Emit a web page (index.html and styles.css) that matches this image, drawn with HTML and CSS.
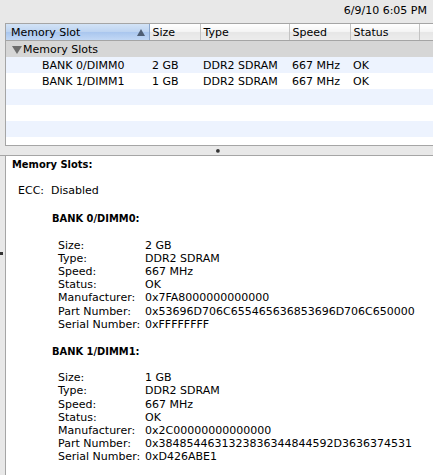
FILE: index.html
```html
<!DOCTYPE html>
<html lang="en">
<head>
    <meta charset="UTF-8">
    <title>System Profiler - Memory</title>
    <link rel="stylesheet" href="styles.css">
</head>
<body>

<!-- Top bar with timestamp -->
<div class="topbar">6/9/10 6:05 PM</div>

<!-- Memory slot table -->
<div class="list-pane">
    <table class="slots">
        <colgroup>
            <col class="c-slot">
            <col class="c-size">
            <col class="c-type">
            <col class="c-speed">
            <col class="c-status">
            <col>
        </colgroup>
        <thead>
            <tr>
                <th class="sorted">Memory Slot <span class="sort-arrow"></span></th>
                <th>Size</th>
                <th>Type</th>
                <th>Speed</th>
                <th>Status</th>
                <th class="filler"></th>
            </tr>
        </thead>
        <tbody>
            <tr class="group">
                <td colspan="6"><span class="disclosure"></span>Memory Slots</td>
            </tr>
            <tr class="odd">
                <td class="indent">BANK 0/DIMM0</td>
                <td>2 GB</td>
                <td>DDR2 SDRAM</td>
                <td>667 MHz</td>
                <td>OK</td>
                <td></td>
            </tr>
            <tr>
                <td class="indent">BANK 1/DIMM1</td>
                <td>1 GB</td>
                <td>DDR2 SDRAM</td>
                <td>667 MHz</td>
                <td>OK</td>
                <td></td>
            </tr>
            <tr class="odd"><td colspan="6"></td></tr>
            <tr><td colspan="6"></td></tr>
            <tr class="odd"><td colspan="6"></td></tr>
        </tbody>
    </table>
</div>

<!-- Splitter -->
<div class="splitter"><span class="dimple"></span></div>

<!-- Detail pane -->
<div class="detail-pane">
    <span class="edge-mark"></span>
    <div class="detail-title">Memory Slots:</div>

    <div class="ecc">
        <span>ECC:</span>
        <span>Disabled</span>
    </div>

    <div class="bank">
        <div class="bank-title">BANK 0/DIMM0:</div>
        <div class="props">
            <span>Size:</span><span>2 GB</span>
            <span>Type:</span><span>DDR2 SDRAM</span>
            <span>Speed:</span><span>667 MHz</span>
            <span>Status:</span><span>OK</span>
            <span>Manufacturer:</span><span>0x7FA8000000000000</span>
            <span>Part Number:</span><span>0x53696D706C655465636853696D706C650000</span>
            <span>Serial Number:</span><span>0xFFFFFFFF</span>
        </div>
    </div>

    <div class="bank">
        <div class="bank-title">BANK 1/DIMM1:</div>
        <div class="props">
            <span>Size:</span><span>1 GB</span>
            <span>Type:</span><span>DDR2 SDRAM</span>
            <span>Speed:</span><span>667 MHz</span>
            <span>Status:</span><span>OK</span>
            <span>Manufacturer:</span><span>0x2C00000000000000</span>
            <span>Part Number:</span><span>0x3848544631323836344844592D3636374531</span>
            <span>Serial Number:</span><span>0xD426ABE1</span>
        </div>
    </div>
</div>

</body>
</html>
```

FILE: styles.css
```css
body {
    font-family: "DejaVu Sans", sans-serif;
    font-size: 11px;
    color: #000;
    margin: 0;
    padding: 0;
    height: 475px;
    overflow: hidden;
    background-color: #e8e8e8;
    display: flex;
    flex-direction: column;
}

/* Top bar */
.topbar {
    height: 23px;
    line-height: 22px;
    text-align: right;
    padding-right: 6px;
}

/* Table pane */
.list-pane {
    margin-left: 5px;
    height: 123px;
    background-color: #fff;
    border-left: 1px solid #a5a5a5;
    border-top: 1px solid #a5a5a5;
    border-bottom: 1px solid #a5a5a5;
    box-sizing: border-box;
    overflow: hidden;
}

.slots {
    width: 100%;
    border-collapse: collapse;
    table-layout: fixed;
}

.c-slot { width: 143px; }
.c-size { width: 51px; }
.c-type { width: 89px; }
.c-speed { width: 61px; }
.c-status { width: 69px; }

.slots th {
    height: 16px;
    padding: 0 0 0 3px;
    text-align: left;
    font-weight: normal;
    background: linear-gradient(#ffffff, #f3f3f3 50%, #e6e6e6 51%, #ececec);
    border-right: 1px solid #c3c3c3;
    border-bottom: 1px solid #a5a5a5;
    white-space: nowrap;
}

.slots th.sorted {
    padding-left: 5px;
    position: relative;
    background: linear-gradient(#d3e3f6, #bcd3f1 50%, #a9c6ee 51%, #c2d8f5);
    border-right: 1px solid #8aa6cc;
}

.slots th.filler {
    border-right: none;
}

.sort-arrow {
    position: absolute;
    right: 4px;
    top: 5px;
    width: 0;
    height: 0;
    border-left: 4px solid transparent;
    border-right: 4px solid transparent;
    border-bottom: 7px solid #4e5e74;
}

.slots td {
    height: 16px;
    padding: 0 0 0 3px;
    white-space: nowrap;
}

.slots tr.odd td {
    background-color: #edf3fe;
}

.slots tr.group td {
    background-color: #d6d6d6;
    padding-left: 6px;
}

.disclosure {
    display: inline-block;
    width: 0;
    height: 0;
    border-left: 5px solid transparent;
    border-right: 5px solid transparent;
    border-top: 8px solid #6d6d6d;
    margin-right: 1px;
    vertical-align: -1px;
}

.slots td.indent {
    padding-left: 36px;
}

/* Splitter */
.splitter {
    height: 9px;
    display: flex;
    justify-content: center;
    align-items: center;
    border-bottom: 1px solid #a5a5a5;
}

.dimple {
    width: 4px;
    height: 4px;
    border-radius: 50%;
    background: radial-gradient(circle at 40% 40%, #333 40%, #999 80%);
    margin-left: 3px;
}

/* Detail pane */
.detail-pane {
    flex: 1;
    margin-left: 5px;
    background-color: #fff;
    border-left: 1px solid #a5a5a5;
    padding: 2px 6px;
    line-height: 13.2px;
    position: relative;
}

.edge-mark {
    position: absolute;
    left: -6px;
    top: 96px;
    width: 3px;
    height: 3px;
    background-color: #333;
}

.detail-title {
    font-weight: bold;
    font-family: "DejaVu Sans Condensed", "DejaVu Sans", sans-serif;
}

.ecc {
    margin-top: 13px;
    padding-left: 6px;
    display: grid;
    grid-template-columns: 33px auto;
}

.bank {
    margin-top: 15px;
    padding-left: 40px;
}

.bank + .bank {
    margin-top: 14px;
}

.bank-title {
    font-weight: bold;
    font-family: "DejaVu Sans Condensed", "DejaVu Sans", sans-serif;
}

.props {
    margin-top: 13px;
    padding-left: 6px;
    display: grid;
    grid-template-columns: 87px auto;
    white-space: nowrap;
}
```
